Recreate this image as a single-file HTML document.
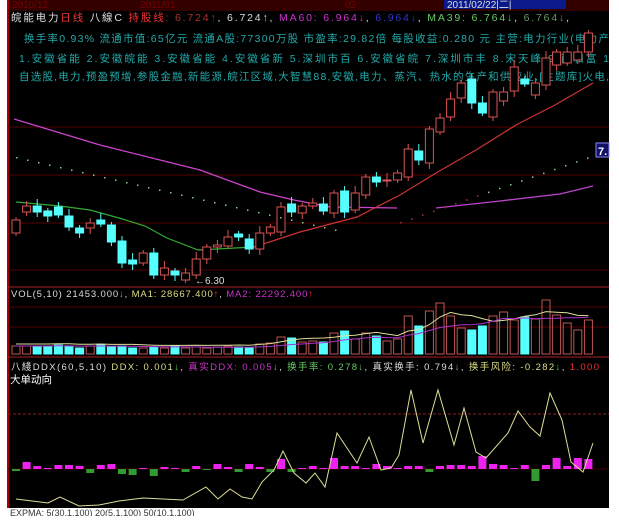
<!DOCTYPE html>
<html><head><meta charset="utf-8">
<style>
html,body{margin:0;padding:0;background:#fff;}
body{width:619px;height:516px;overflow:hidden;position:relative;font-family:"Liberation Sans","Noto Sans CJK SC",sans-serif;}
svg text{font-family:"Liberation Sans","Noto Sans CJK SC",sans-serif;}
</style></head><body>
<svg id="s" width="619" height="516" viewBox="0 0 619 516" xmlns="http://www.w3.org/2000/svg">
<rect x="0" y="0" width="619" height="516" fill="#fff"/>
<rect x="8" y="0" width="601" height="508" fill="#000"/>
<rect x="8" y="0" width="601" height="9" fill="#300"/>
<line x1="8" y1="0" x2="8" y2="508" stroke="#a00" stroke-width="2"/>
<text x="12" y="8" font-size="10" fill="#700">2010/12</text>
<text x="140" y="8" font-size="10" fill="#700">2011/01</text>
<text x="345" y="8" font-size="10" fill="#700">02</text>
<rect x="444" y="0" width="122" height="9" fill="#0a1a8a"/>
<text x="447" y="8" font-size="10" fill="#ddd">2011/02/22|二|</text>
<line x1="8" y1="10" x2="609" y2="10" stroke="#600"/>
<text x="11" y="21" font-size="10.5" fill="#ddd" textLength="558" lengthAdjust="spacing">皖能电力<tspan fill="#e33">日线</tspan> 八線C <tspan fill="#e33">持股线</tspan><tspan fill="#a33">: 6.724↑</tspan>, <tspan fill="#ddd">6.724↑</tspan>, <tspan fill="#c3c">MA60: 6.964↓</tspan>, <tspan fill="#33c">6.964↓</tspan>, <tspan fill="#6c6">MA39: 6.764↓</tspan>, <tspan fill="#696">6.764↓</tspan>,</text>
<text x="24" y="42" font-size="10.5" fill="#2aa" textLength="585" lengthAdjust="spacing">换手率0.93%  流通市值:65亿元  流通A股:77300万股  市盈率:29.82倍  每股收益:0.280 元  主营:电力行业(电力产</text>
<text x="19" y="62" font-size="10.5" fill="#2aa" textLength="590" lengthAdjust="spacing">1.安徽省能  2.安徽皖能  3.安徽省能  4.安徽省新  5.深圳市百  6.安徽省皖  7.深圳市丰  8.宋天峰  9.西和富  1</text>
<text x="19" y="80" font-size="10.5" fill="#2aa" textLength="590" lengthAdjust="spacing">自选股,电力,预盈预增,参股金融,新能源,皖江区域,大智慧88,安徽,电力、蒸汽、热水的生产和供应业,[主题库]火电,</text>
<g stroke="#500" stroke-width="1">
<line x1="8" y1="127" x2="609" y2="127"/><line x1="8" y1="175" x2="609" y2="175"/>
<line x1="8" y1="223" x2="609" y2="223"/><line x1="8" y1="270" x2="609" y2="270"/>
<line x1="8" y1="287" x2="609" y2="287" stroke="#a22"/>
<line x1="8" y1="307" x2="609" y2="307"/><line x1="8" y1="327" x2="609" y2="327"/>
<line x1="8" y1="357" x2="609" y2="357" stroke="#a22"/>
</g>
<line x1="8" y1="414" x2="609" y2="414" stroke="#822" stroke-dasharray="3,2"/>
<line x1="8" y1="469" x2="609" y2="469" stroke="#400"/>
<polyline fill="none" stroke="#c4c" stroke-width="1.3" points="14,119 100,145 200,170 260,192 294,200 330,207 397,208"/>
<polyline fill="none" stroke="#b4c" stroke-width="1.3" points="436,208 500,201 560,194 593,186"/>
<polyline fill="none" stroke="#3a3" stroke-width="1.2" points="16,202 60,206 90,210 119,218 145,226 167,238 198,250 254,247"/>
<polyline fill="none" stroke="#c33" stroke-width="1.2" points="254,247 300,232 357,217 400,195 436,173 476,150 516,125 555,105 593,83"/>
<rect x="596" y="143" width="13" height="14" fill="#116" stroke="#88f"/>
<text x="598" y="155" font-size="11" font-weight="bold" fill="#fff">7.</text>
<text x="195" y="284" font-size="10" fill="#ddd">←6.30</text>
<text x="11" y="297" font-size="9.5" fill="#ddd" textLength="302" lengthAdjust="spacing">VOL(5,10) 21453.000<tspan fill="#6c6">↓</tspan>, <tspan fill="#dd8">MA1: 28667.400</tspan><tspan fill="#e33">↑</tspan>, <tspan fill="#c3c">MA2: 22292.400</tspan><tspan fill="#e33">↑</tspan></text>
<text x="11" y="370" font-size="9.5" fill="#ddd" textLength="588" lengthAdjust="spacing">八綫DDX(60,5,10) <tspan fill="#dd8">DDX: 0.001</tspan><tspan fill="#6c6">↓</tspan>, <tspan fill="#c3c">真实DDX: 0.005</tspan><tspan fill="#6c6">↓</tspan>, <tspan fill="#6c6">换手率: 0.278↓</tspan>, 真实换手: 0.794<tspan fill="#6c6">↓</tspan>, <tspan fill="#dd8">换手风险: -0.282</tspan><tspan fill="#6c6">↓</tspan>, <tspan fill="#e33">1.000</tspan></text>
<text x="10" y="383" font-size="10.5" fill="#fff">大单动向</text>
<g id="c"></g>
<polyline fill="none" stroke="#dd9" stroke-width="1" points="16,499 48,503 60,497 79,506 99,505 119,501 143,498 183,500 206,487 218,499 230,489 242,497 252,499 262,482 274,470 283,451 294,473 306,483 315,473 325,487 337,433 357,463 369,437 381,470 391,468 399,455 411,390 423,443 438,390 454,445 464,408 476,452 486,458 508,433 518,411 530,427 540,436 550,393 562,420 571,462 583,472 593,443"/>
<text x="10" y="516" font-size="9" fill="#333">EXPMA: 5(30,1,100) 20(5,1,100) 50(10,1,100)</text>
</svg>
<script>
var C=[[1,220,233],[1,206,212],[0,206,212],[0,211,216],[0,207,215],[0,216,227],[0,228,233],[1,223,228],[0,220,224],[0,225,242],[0,241,263],[0,260,264],[1,253,263],[0,253,275],[1,268,275],[0,271,275],[1,273,280],[1,259,275],[1,247,259],[1,245,247],[1,237,246],[0,234,237],[0,239,249],[1,233,249],[1,227,233],[1,207,232],[0,204,212],[1,206,213],[1,203,206],[0,204,211],[1,193,213],[0,191,212],[1,193,210],[1,177,195],[0,177,182],[1,180,181],[1,173,180],[1,149,177],[0,151,160],[1,129,163],[1,118,132],[1,99,117],[1,83,98],[0,79,103],[0,103,113],[1,92,117],[1,92,101],[1,67,91],[0,79,84],[1,83,95],[1,58,85],[1,52,65],[1,52,63],[1,52,60],[1,33,52]];
var V=[346,346,346,346,345,346,348,346,345,347,346,348,348,347,348,346,348,347,348,347,346,347,348,344,343,337,338,342,341,342,333,331,339,333,336,341,339,316,326,311,303,316,328,330,326,316,312,320,317,319,300,315,323,330,320];
var D=[-2,-7,-3,-1,-4,-4,-3,-4,-4,5,5,6,-1,-7,-2,-1,-3,-3,-1,-5,-2,-3,5,-2,-3,-10,-3,-1,-3,-1,-11,-3,-3,-1,-5,-3,-1,-3,-3,-3,-3,-4,4,-3,-13,-5,-4,-1,-4,-12,-4,-11,-3,-11,-10];
var s='';
for(var i=0;i<C.length;i++){var x=16+i*10.6,c=C[i],up=c[0]==1,col=up?'#d55':'#5ff';
var wt=c[1]-3-(i%3)*2,wb=c[2]+3+(i%4);
s+='<line x1="'+x+'" y1="'+wt+'" x2="'+x+'" y2="'+wb+'" stroke="'+col+'"/>';
s+='<rect x="'+(x-4)+'" y="'+c[1]+'" width="8" height="'+Math.max(1,c[2]-c[1])+'" fill="'+(up?'#000':col)+'" stroke="'+col+'"/>';
var vt=V[i];s+='<rect x="'+(x-4)+'" y="'+vt+'" width="8" height="'+(354-vt)+'" fill="'+(up?'none':'#5ff')+'" stroke="'+(up?'#b55':'#5ff')+'"/>';
var green=[0,7,10,11,13,16,18,21,24,26,39,49].indexOf(i)>=0;
var h=Math.abs(D[i]);s+='<rect x="'+(x-4)+'" y="'+(green?469:469-h)+'" width="8" height="'+h+'" fill="'+(green?'#393':'#e2e')+'"/>';
}
var dots='';for(var k=0;k<30;k++){var x=16+k*11,y=157+k*2.5;dots+='<rect x="'+x+'" y="'+y+'" width="1.5" height="1.5" fill="#8c8"/>';}
for(var k=0;k<18;k++){var x=400+k*11,y=222-k*3.8;dots+='<rect x="'+x+'" y="'+y+'" width="1.5" height="1.5" fill="'+(k<8?'#a33':'#8c8')+'"/>';}
var p=[];for(var i=0;i<V.length;i++){var a=0,n=0;for(var j=Math.max(0,i-4);j<=i;j++){a+=V[j];n++;}p.push((16+i*10.6)+','+(a/n-2));}
dots+='<polyline fill="none" stroke="#dd9" points="'+p.join(' ')+'"/>';
p=[];for(var i=0;i<V.length;i++){var a=0,n=0;for(var j=Math.max(0,i-9);j<=i;j++){a+=V[j];n++;}p.push((16+i*10.6)+','+(a/n));}
dots+='<polyline fill="none" stroke="#a3c" points="'+p.join(' ')+'"/>';
document.getElementById('c').innerHTML=s+dots;
</script>
</body></html>
